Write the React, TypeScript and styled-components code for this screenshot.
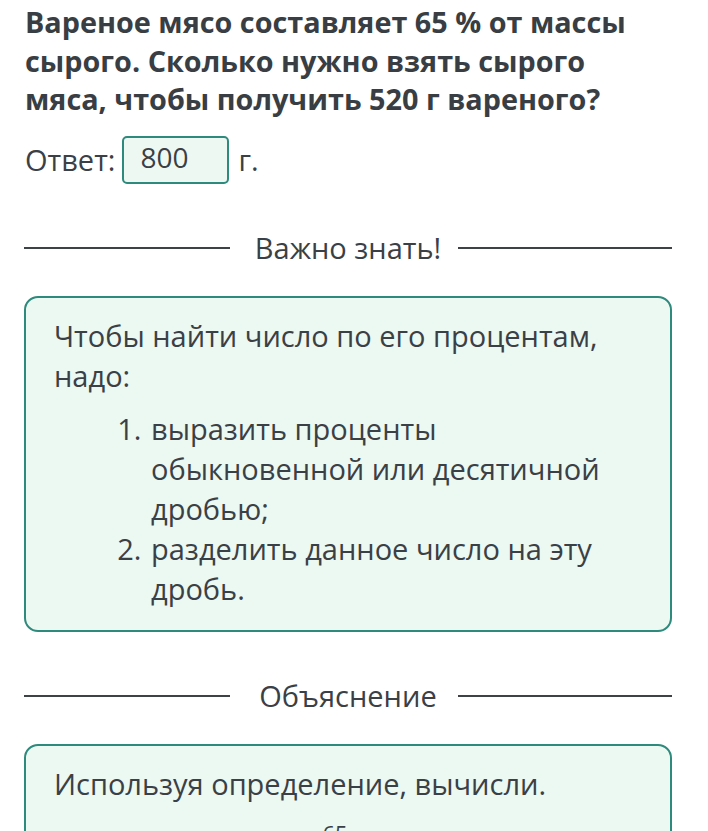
import React from "react";
import styled, { createGlobalStyle } from "styled-components";

const Global = createGlobalStyle`
  html, body {
    margin: 0;
    padding: 0;
    background: #ffffff;
  }
  body {
    font-family: "Open Sans", "Noto Sans", sans-serif;
    color: #3a4045;
  }
`;

const Page = styled.div`
  padding: 3px 36px 0 24px;
  display: flex;
  flex-direction: column;
`;

const Title = styled.h1`
  margin: 0 0 0 1px;
  max-width: 625px;
  font-size: 28.8px;
  line-height: 38.5px;
  font-weight: 700;
  color: #383e43;
`;

const AnswerRow = styled.div`
  margin-top: 17px;
  display: flex;
  align-items: center;
  gap: 7px;
  font-size: 29px;
  line-height: 38px;
  padding-left: 1px;
`;

const AnswerBox = styled.div`
  box-sizing: border-box;
  width: 107px;
  height: 48px;
  margin-right: 2px;
  border: 2px solid #2e8a7c;
  border-radius: 5px;
  background: #eef8f3;
  padding: 0 0 6px 16px;
  display: flex;
  align-items: center;
  font-size: 28px;
  color: #3a4045;
`;

const Separator = styled.div`
  display: grid;
  grid-template-columns: 206fr 228fr 214fr;
  align-items: center;
  margin-top: 44px;
  font-size: 29px;
  line-height: 40px;
`;

const Rule = styled.div`
  height: 2px;
  background: #3d4247;
`;

const SeparatorLabel = styled.div`
  text-align: center;
  padding-left: 8px;
  color: #3a4045;
  white-space: nowrap;
`;

const Card = styled.div`
  margin-top: 28px;
  border: 2px solid #2e8a7c;
  border-radius: 14px;
  background: #ecf8f2;
  padding: 18px 24px 21px 28px;
  font-size: 29px;
  line-height: 40px;
  color: #3a4045;
`;

const Para = styled.p`
  margin: 0;
`;

const List = styled.ol`
  margin: 13px 0 0 0;
  padding-left: 95px;
  li {
    padding-left: 2px;
  }
`;

const Formula = styled.div`
  display: flex;
  justify-content: center;
  margin-top: 16px;
  padding-right: 30px;
`;

const Fraction = styled.span`
  display: inline-flex;
  flex-direction: column;
  align-items: center;
  font-size: 22px;
  line-height: 26px;
`;

const Numer = styled.span`
  padding: 0 2px 2px;
  border-bottom: 2px solid #3a4045;
`;

function Divider({ label }: { label: string }) {
  return (
    <Separator>
      <Rule />
      <SeparatorLabel>{label}</SeparatorLabel>
      <Rule />
    </Separator>
  );
}

export default function App() {
  return (
    <>
      <Global />
      <Page>
        <Title>
          Вареное мясо составляет 65&nbsp;% от массы сырого. Сколько нужно
          взять сырого мяса, чтобы получить 520 г вареного?
        </Title>
        <AnswerRow>
          <span>Ответ:</span>
          <AnswerBox>800</AnswerBox>
          <span>г.</span>
        </AnswerRow>

        <Divider label="Важно знать!" />
        <Card>
          <Para>Чтобы найти число по его процентам, надо:</Para>
          <List>
            <li>выразить проценты обыкновенной или десятичной дробью;</li>
            <li>разделить данное число на эту дробь.</li>
          </List>
        </Card>

        <Divider label="Объяснение" />
        <Card>
          <Para>Используя определение, вычисли.</Para>
          <Formula>
            <Fraction>
              <Numer>65</Numer>
              <span>100</span>
            </Fraction>
          </Formula>
        </Card>
      </Page>
    </>
  );
}
